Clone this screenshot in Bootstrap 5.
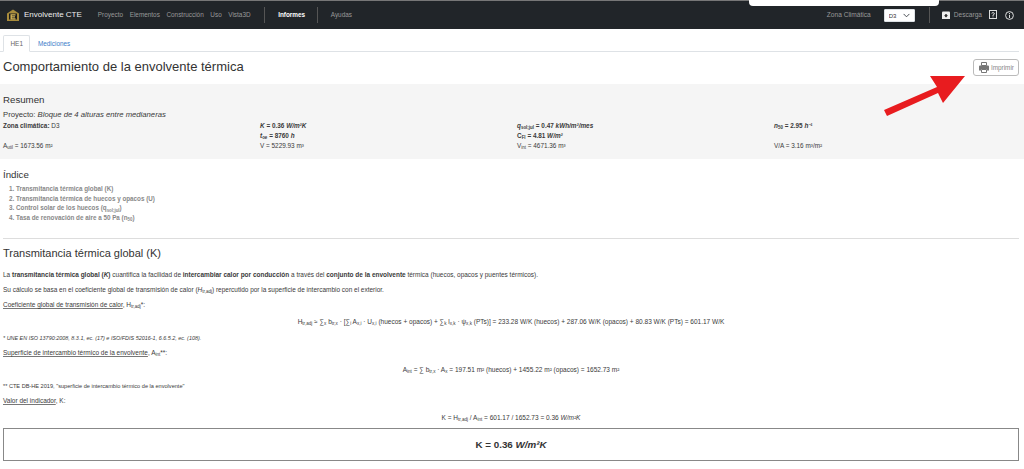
<!DOCTYPE html>
<html lang="es">
<head>
  <meta charset="UTF-8" />
  <meta name="viewport" content="width=device-width, initial-scale=1.0"/>
  <title>Envolvente CTE</title>
  <link href="https://cdn.jsdelivr.net/npm/bootstrap@5.3.0/dist/css/bootstrap.min.css" rel="stylesheet">
  <style>
    body { font-family: "Liberation Sans", Arial, sans-serif; font-size: 6.5px; color: #3a3a3a; line-height: 10px; background: #fff; overflow: hidden; height: 469px; }
    sub { font-size: 70%; }
    sup { font-size: 70%; }

    /* barra superior */
    .top-bar { height: 29px; background: #212529; border-top: 1px solid #777; padding: 0 0 0 7px; flex-wrap: nowrap; justify-content: flex-start; font-size: 6.4px; }
    .brand-name { color: #eee; font-size: 8px; margin: 0 16px 0 5px; white-space: nowrap; }
    .top-link { color: #999; white-space: nowrap; margin-right: 6.6px; text-decoration: none; }
    .top-link.act { color: #fff; font-weight: 700; }
    .top-sep { width: 1px; height: 16px; background: #555; margin: 0 13px 0 7px; }
    .top-sep.narrow { margin-left: 5px; }
    .top-right { margin-left: auto; padding-right: 10px; }
    .zone-name { font-size: 6.6px; margin: 0 1px 0 0; }
    .down-name { font-size: 6.6px; margin: 0 7px 0 4px; }
    .zone-select { width: 31px; height: 13px; padding: 0 0 0 4px; font-size: 6px; line-height: 13px; border-radius: 1px; background-size: 7px; background-position: right 4px center; margin: 0 14px 0 12px; color: #333; }
    .search-drop { position: absolute; left: 749px; top: 0; width: 190px; height: 6px; background: #fff; border-radius: 0 0 4px 4px; }
    .ico { display: block; flex: none; }

    /* pestañas */
    .page-tabs { padding: 6px 0 0 3px; margin: 0 5px 0 0; font-size: 6.4px; }
    .page-tabs .nav-link { padding: 0 6.5px; height: 17px; line-height: 16px; border-radius: 2px 2px 0 0; color: #3d7cc9; }
    .page-tabs .nav-link.active { color: #666; }

    .title-row { padding: 6px 5px 0 3px; height: 32px; }
    .main-title { font-size: 13px; line-height: 18px; font-weight: 400; margin: 0; color: #333; }
    .print-btn { font-size: 6.4px; line-height: 10px; padding: 3px 4px 3px 5px; height: 17px; margin-top: 1px; color: #888; border: 1px solid #bbb; border-radius: 3px; display: flex; align-items: center; gap: 2px; background: #fff; }

    .summary-box { background: #f5f5f5; height: 75px; padding: 9px 3px 0; }
    .sect-title { font-size: 9.7px; line-height: 13px; font-weight: 400; margin: 0; color: #333; }
    .project-line { font-size: 7.7px; line-height: 11px; margin-top: 3px; }
    .summary-cols { display: grid; grid-template-columns: repeat(4, 257px); grid-auto-rows: 10px; line-height: 10px; font-size: 6.4px; margin-top: 1px; }

    .index-box { padding: 9px 3px 0; height: 79px; }
    .index-list { margin: 3px 0 0; padding: 0 0 0 13px; color: #888; font-weight: 700; font-size: 6.3px; line-height: 9.7px; }

    .divider { margin: 0 5px 0 3px; border: 0; border-top: 1px solid #ddd; opacity: 1; height: 1px; }
    .body-box { padding: 5px 5px 0 3px; }
    .k-title { font-size: 11px; line-height: 18px; font-weight: 400; margin: 0 0 8px; color: #333; }
    .txt { margin: 0 0 5px; font-size: 6.47px; line-height: 10px; white-space: nowrap; }
    .txt-u { text-decoration: underline; text-decoration-color: #777; }
    .formula { margin: 7px 0 6px; text-align: center; font-size: 6.53px; line-height: 10px; white-space: nowrap; }
    .foot-note { margin: 0 0 5px; font-size: 5.45px; line-height: 10px; font-style: italic; white-space: nowrap; }
    .foot-note.plain { font-style: normal; font-size: 5.6px; }
    .result-box { margin-top: 5px; height: 33px; border: 1px solid #888; display: flex; align-items: center; justify-content: center; font-size: 9.8px; font-weight: 700; color: #333; }

    .red-arrow { position: absolute; left: 880px; top: 70px; pointer-events: none; }
  </style>
</head>
<body>

  <!-- Navegación -->
  <nav class="navbar top-bar">
    <svg class="ico" width="12" height="12" viewBox="0 0 12 12" aria-hidden="true">
      <path d="M0 4.500 6 .5 12 4.500V12H0z" fill="#a88c3c"/>
      <path d="M2 4.500h8V10.500H2z" fill="#1c1c1c"/>
      <path d="M3.500 5.200h5v1.200H4.800v.9H8v1.100H4.800v.9h3.700v1.200h-5z" fill="#d8b858"/>
    </svg>
    <span class="brand-name">Envolvente CTE</span>
    <a class="top-link" href="#">Proyecto</a>
    <a class="top-link" href="#">Elementos</a>
    <a class="top-link" href="#">Construcción</a>
    <a class="top-link" href="#">Uso</a>
    <a class="top-link" href="#">Vista3D</a>
    <span class="top-sep"></span>
    <a class="top-link act" href="#">Informes</a>
    <span class="top-sep narrow"></span>
    <a class="top-link" href="#">Ayudas</a>

    <div class="d-flex align-items-center top-right">
      <span class="top-link zone-name">Zona Climática</span>
      <select class="form-select zone-select"><option>D3</option></select>
      <span class="top-sep" style="margin:0 12px 0 0"></span>
      <svg class="ico" width="8" height="8" viewBox="0 0 8 8" aria-hidden="true"><path d="M0 1.500Q0 .5 1 .5H7Q8 .5 8 1.500V8H0z" fill="#eee"/><path d="M3.300 3h1.400v1.300H6L4 6.500 2 4.300h1.300z" fill="#222"/></svg>
      <span class="top-link down-name">Descarga</span>
      <svg class="ico" width="8" height="10" viewBox="0 0 8 10" aria-hidden="true"><rect x=".5" y=".5" width="7" height="8" fill="none" stroke="#ddd"/><path d="M2.600 3.300q1.400-1.500 2.800 0 .3 1-1.400 1.800v.9M4 6.500v.9" fill="none" stroke="#ddd"/></svg>
      <svg class="ico ms-2" width="9" height="9" viewBox="0 0 9 9" aria-hidden="true"><circle cx="4.500" cy="4.500" r="3.900" fill="none" stroke="#ddd"/><path d="M4.500 3.800V7M4.500 2v1" stroke="#ddd"/></svg>
    </div>
  </nav>
  <div class="search-drop"></div>

  <!-- Pestañas -->
  <ul class="nav nav-tabs page-tabs">
    <li class="nav-item"><a class="nav-link active" href="#">HE1</a></li>
    <li class="nav-item"><a class="nav-link" href="#">Mediciones</a></li>
  </ul>

  <div class="d-flex justify-content-between title-row">
    <h1 class="main-title">Comportamiento de la envolvente térmica</h1>
    <button class="btn print-btn" type="button">
      <svg class="ico" width="10" height="11" viewBox="0 0 10 11" aria-hidden="true"><path d="M2.500.5h5v3h-5z" fill="none" stroke="#777"/><path d="M1 3.500h8q1 0 1 1V8.500H8V7H2V8.500H0V4.500q0-1 1-1z" fill="#777"/><path d="M2.500 7.500h5v3h-5z" fill="none" stroke="#777"/></svg>
      Imprimir
    </button>
  </div>

  <!-- Resumen -->
  <section class="summary-box">
    <h2 class="sect-title">Resumen</h2>
    <div class="project-line">Proyecto: <i>Bloque de 4 alturas entre medianeras</i></div>
    <div class="summary-cols">
      <div><b>Zona climática:</b> D3</div>
      <div><b><i>K</i> = 0.36 <i>W/m²K</i></b></div>
      <div><b><i>q</i><sub>sol;jul</sub> = 0.47 <i>kWh/m²/mes</i></b></div>
      <div><b><i>n</i><sub>50</sub> = 2.95 <i>h⁻¹</i></b></div>
      <div></div>
      <div><b><i>t</i><sub>oe</sub> = 8760 <i>h</i></b></div>
      <div><b>C<sub>FI</sub> = 4.81 <i>W/m²</i></b></div>
      <div></div>
      <div>A<sub>util</sub> = 1673.56 m²</div>
      <div>V = 5229.93 m³</div>
      <div>V<sub>int</sub> = 4671.36 m³</div>
      <div>V/A = 3.16 m³/m²</div>
    </div>
  </section>

  <!-- Índice -->
  <section class="index-box">
    <h2 class="sect-title">Índice</h2>
    <ol class="index-list">
      <li>Transmitancia térmica global (K)</li>
      <li>Transmitancia térmica de huecos y opacos (U)</li>
      <li>Control solar de los huecos (q<sub>sol;jul</sub>)</li>
      <li>Tasa de renovación de aire a 50 Pa (n<sub>50</sub>)</li>
    </ol>
  </section>

  <hr class="divider">

  <section class="body-box">
    <h2 class="k-title">Transmitancia térmica global (K)</h2>
    <p class="txt">La <b>transmitancia térmica global (<i>K</i>)</b> cuantifica la facilidad de <b>intercambiar calor por conducción</b> a través del <b>conjunto de la envolvente</b> térmica (huecos, opacos y puentes térmicos).</p>
    <p class="txt">Su cálculo se basa en el coeficiente global de transmisión de calor (<i>H</i><sub>tr,adj</sub>) repercutido por la superficie de intercambio con el exterior.</p>
    <p class="txt"><span class="txt-u">Coeficiente global de transmisión de calor</span>, H<sub>tr,adj</sub>*:</p>
    <p class="formula">H<sub>tr,adj</sub> ≈ ∑<sub>x</sub> b<sub>tr,x</sub> · [∑<sub>i</sub> A<sub>x,i</sub> · U<sub>x,i</sub> (huecos + opacos) + ∑<sub>k</sub> l<sub>x,k</sub> · ψ<sub>x,k</sub> (PTs)] = 233.28 W/K (huecos) + 287.06 W/K (opacos) + 80.83 W/K (PTs) = 601.17 W/K</p>
    <p class="foot-note">* UNE EN ISO 13790:2008, 8.3.1, ec. (17) e ISO/FDIS 52016-1, 6.6.5.2, ec. (108).</p>
    <p class="txt"><span class="txt-u">Superficie de intercambio térmico de la envolvente</span>, A<sub>int</sub>**:</p>
    <p class="formula">A<sub>int</sub> = ∑ b<sub>tr,x</sub> · A<sub>x</sub> = 197.51 m² (huecos) + 1455.22 m² (opacos) = 1652.73 m²</p>
    <p class="foot-note plain">** CTE DB-HE 2019, "superficie de intercambio térmico de la envolvente"</p>
    <p class="txt"><span class="txt-u">Valor del indicador</span>, K:</p>
    <p class="formula mb-0">K = H<sub>tr,adj</sub> / A<sub>int</sub> = 601.17 / 1652.73 = 0.36 <i>W/m²K</i></p>
    <div class="result-box"><span>K = 0.36 <i>W/m²K</i></span></div>
  </section>

  <!-- Flecha roja sobre la captura -->
  <svg class="red-arrow" width="90" height="50" viewBox="880 70 90 50" aria-hidden="true">
    <path d="M884 110 937 87 930 76 965 76 943 103 938 93 887 116z" fill="#e81c1f"/>
  </svg>

  <script src="https://cdn.jsdelivr.net/npm/bootstrap@5.3.0/dist/js/bootstrap.bundle.min.js"></script>
</body>
</html>
